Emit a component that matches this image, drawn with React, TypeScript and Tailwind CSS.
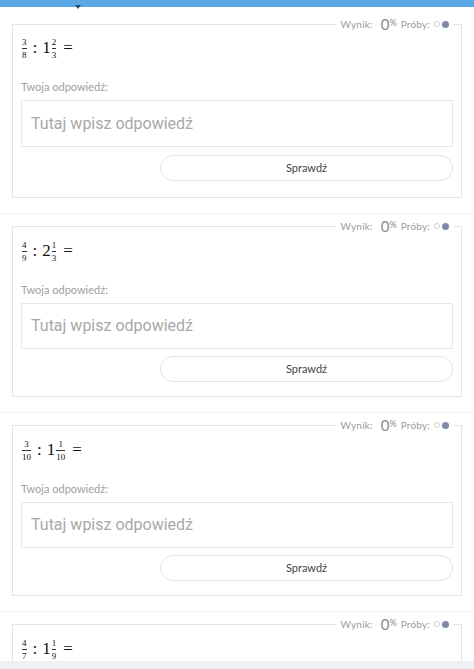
import React from 'react';

interface Task {
  a: [string, string];
  whole: string;
  b: [string, string];
}

const tasks: Task[] = [
  { a: ['3', '8'], whole: '1', b: ['2', '3'] },
  { a: ['4', '9'], whole: '2', b: ['1', '3'] },
  { a: ['3', '10'], whole: '1', b: ['1', '10'] },
  { a: ['4', '7'], whole: '1', b: ['1', '9'] },
];

const Frac: React.FC<{ n: string; d: string }> = ({ n, d }) => (
  <span className="inline-flex flex-col items-center align-middle px-[1px] text-[9px] leading-[10px]">
    <span>{n}</span>
    <span className="w-full h-[1px] bg-[#333] my-[1px]" />
    <span>{d}</span>
  </span>
);

const Legend: React.FC = () => (
  <div className="absolute right-[7px] -top-[9px] flex items-center gap-[4px] bg-white px-[5px] font-['Lato',sans-serif] text-[#9b9b9b]">
    <span className="text-[10px] tracking-[0.2px]">Wynik:</span>
    <span className="ml-[4px] flex items-center text-[#8a8a8a]">
      <span className="text-[15px] leading-[16px]">0</span>
      <span className="text-[9px] leading-[10px] -mt-[2px]">%</span>
    </span>
    <span className="text-[10px] tracking-[0.2px]">Próby:</span>
    <span className="flex items-center gap-[2px]">
      <span className="w-[6px] h-[6px] rounded-full border border-[#cfcfcf]" />
      <span className="w-[7px] h-[7px] rounded-full bg-[#7f89a8]" />
    </span>
  </div>
);

const TaskCard: React.FC<{ task: Task; first?: boolean; partial?: boolean }> = ({
  task,
  first,
  partial,
}) => (
  <div
    className={`relative mx-[12px] border border-[#e4e4e4] px-[8px] ${
      first ? 'h-[174px] pt-[11px]' : 'h-[171px] pt-[12px]'
    }`}
  >
    <Legend />
    <div className="flex items-center h-[24px] font-['Liberation_Serif',serif] text-[17px] text-[#111]">
      <Frac n={task.a[0]} d={task.a[1]} />
      <span className="mx-[5px]">:</span>
      <span>{task.whole}</span>
      <Frac n={task.b[0]} d={task.b[1]} />
      <span className="ml-[6px]">=</span>
    </div>
    {!partial && (
      <>
        <div className="mt-[20px] text-[11px] leading-[14px] text-[#a0a0a0] font-['Lato',sans-serif]">
          Twoja odpowiedź:
        </div>
        <div
          className={`mt-[6px] ${
            first ? 'h-[47px]' : 'h-[46px]'
          } border border-[#e8e8e8] flex items-center px-[9px] font-['Roboto',sans-serif] text-[16px] text-[#a8a8a8]`}
        >
          Tutaj wpisz odpowiedź
        </div>
        <div className={`flex justify-end ${first ? 'mt-[8px]' : 'mt-[7px]'}`}>
          <button className="w-[293px] h-[26px] rounded-full border border-[#e4e4e4] bg-white text-[11px] text-[#444] font-['Lato',sans-serif]">
            Sprawdź
          </button>
        </div>
      </>
    )}
  </div>
);

export default function App() {
  return (
    <div className="relative w-[474px] h-[669px] overflow-hidden bg-white">
      <div className="relative h-[7px] bg-[#5ba6e4]">
        <span className="absolute left-[75px] top-[5px] w-0 h-0 border-l-[3px] border-r-[3px] border-t-[4px] border-l-transparent border-r-transparent border-t-[#2b4a6a]" />
      </div>
      <div className="pt-[17px]">
        {tasks.map((t, i) => (
          <div key={i}>
            <TaskCard task={t} first={i === 0} partial={i === tasks.length - 1} />
            {i < tasks.length - 1 && (
              <div className="mt-[15px] mb-[12px] h-[1px] bg-[#f3f3f3]" />
            )}
          </div>
        ))}
      </div>
      <div className="absolute left-0 right-0 bottom-0 h-[8px] bg-[#eef2f7]" />
    </div>
  );
}
